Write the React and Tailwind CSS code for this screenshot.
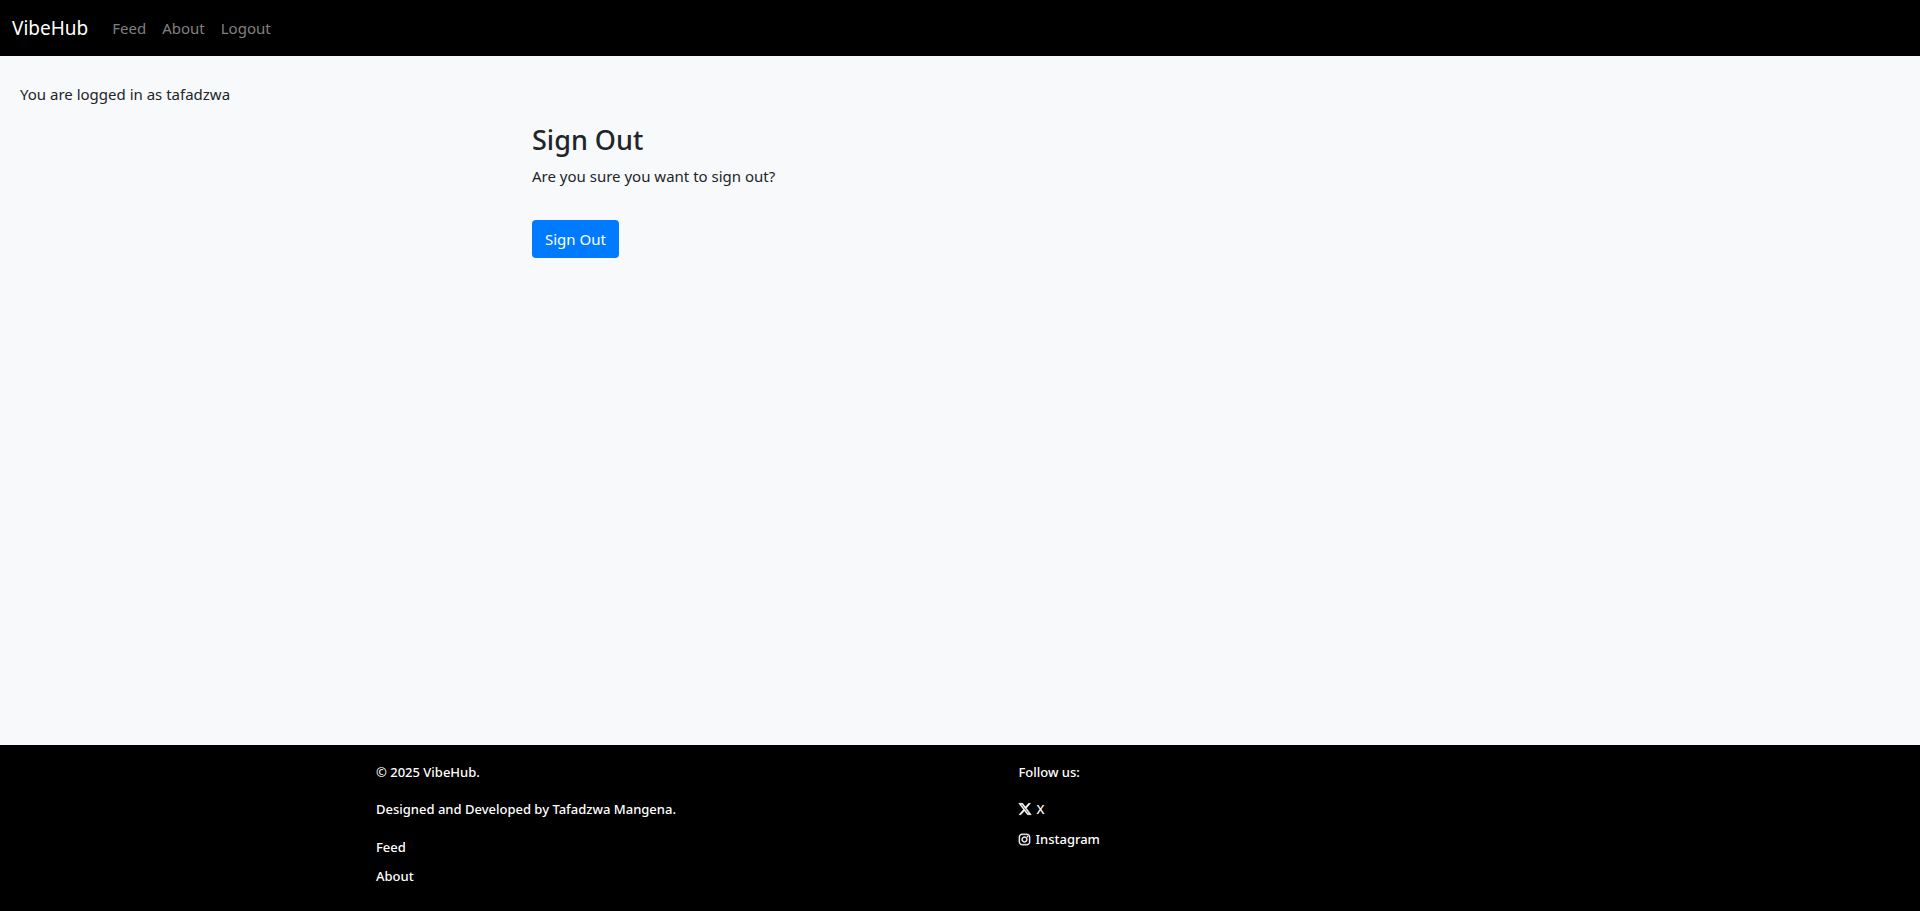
import React from "react";
import { FaInstagram, FaXTwitter } from "react-icons/fa6";

const navLinks = ["Feed", "About", "Logout"];

function NavBar() {
  return (
    <nav className="flex h-14 items-center bg-black px-3">
      <a href="#home" className="mr-4 text-[19px] leading-8 text-white">VibeHub</a>
      <ul className="flex">
        {navLinks.map((label) => (
          <li key={label}>
            <a href={"#" + label.toLowerCase()} className="block px-2 text-[15px] leading-6 text-[#808080] hover:text-white">
              {label}
            </a>
          </li>
        ))}
      </ul>
    </nav>
  );
}

function Footer() {
  return (
    <footer className="bg-black text-[13px] font-medium leading-5 text-white">
      <div className="mx-auto grid max-w-[1200px] grid-cols-[55fr_45fr] px-4 pt-[17px] pb-[25px]">
        <div>
          <p className="mb-[17px]">© 2025 VibeHub.</p>
          <p className="mb-[18px]">Designed and Developed by Tafadzwa Mangena.</p>
          <ul className="flex flex-col gap-[9px]">
            <li><a href="#feed">Feed</a></li>
            <li><a href="#about">About</a></li>
          </ul>
        </div>
        <div>
          <p className="mb-[17px]">Follow us:</p>
          <ul className="flex flex-col gap-[10px]">
            <li className="flex">
              <a href="#x" className="inline-flex items-center gap-1">
                <FaXTwitter size={14} stroke="currentColor" strokeWidth={18} aria-hidden="true" />X
              </a>
            </li>
            <li className="flex">
              <a href="#instagram" className="inline-flex items-center gap-1">
                <FaInstagram size={13} stroke="currentColor" strokeWidth={14} aria-hidden="true" />Instagram
              </a>
            </li>
          </ul>
        </div>
      </div>
    </footer>
  );
}

export default function App() {
  return (
    <div className="flex min-h-screen flex-col bg-[#f8f9fa] font-['Segoe_UI','Noto_Sans',sans-serif] text-[15px] leading-6 text-[#212529]">
      <NavBar />
      <main className="flex-1 px-5 pt-[26px]">
        <p>You are logged in as tafadzwa</p>
        <section className="mx-auto mt-4 max-w-[856px]">
          <h1 className="mb-1.5 text-[27px] font-medium leading-9">Sign Out</h1>
          <p>Are you sure you want to sign out?</p>
          <form className="mt-8" onSubmit={(event) => event.preventDefault()}>
            <button type="submit" className="rounded bg-[#007bff] px-[13px] py-[7px] leading-6 text-white hover:bg-[#0069d9]">
              Sign Out
            </button>
          </form>
        </section>
      </main>
      <Footer />
    </div>
  );
}
